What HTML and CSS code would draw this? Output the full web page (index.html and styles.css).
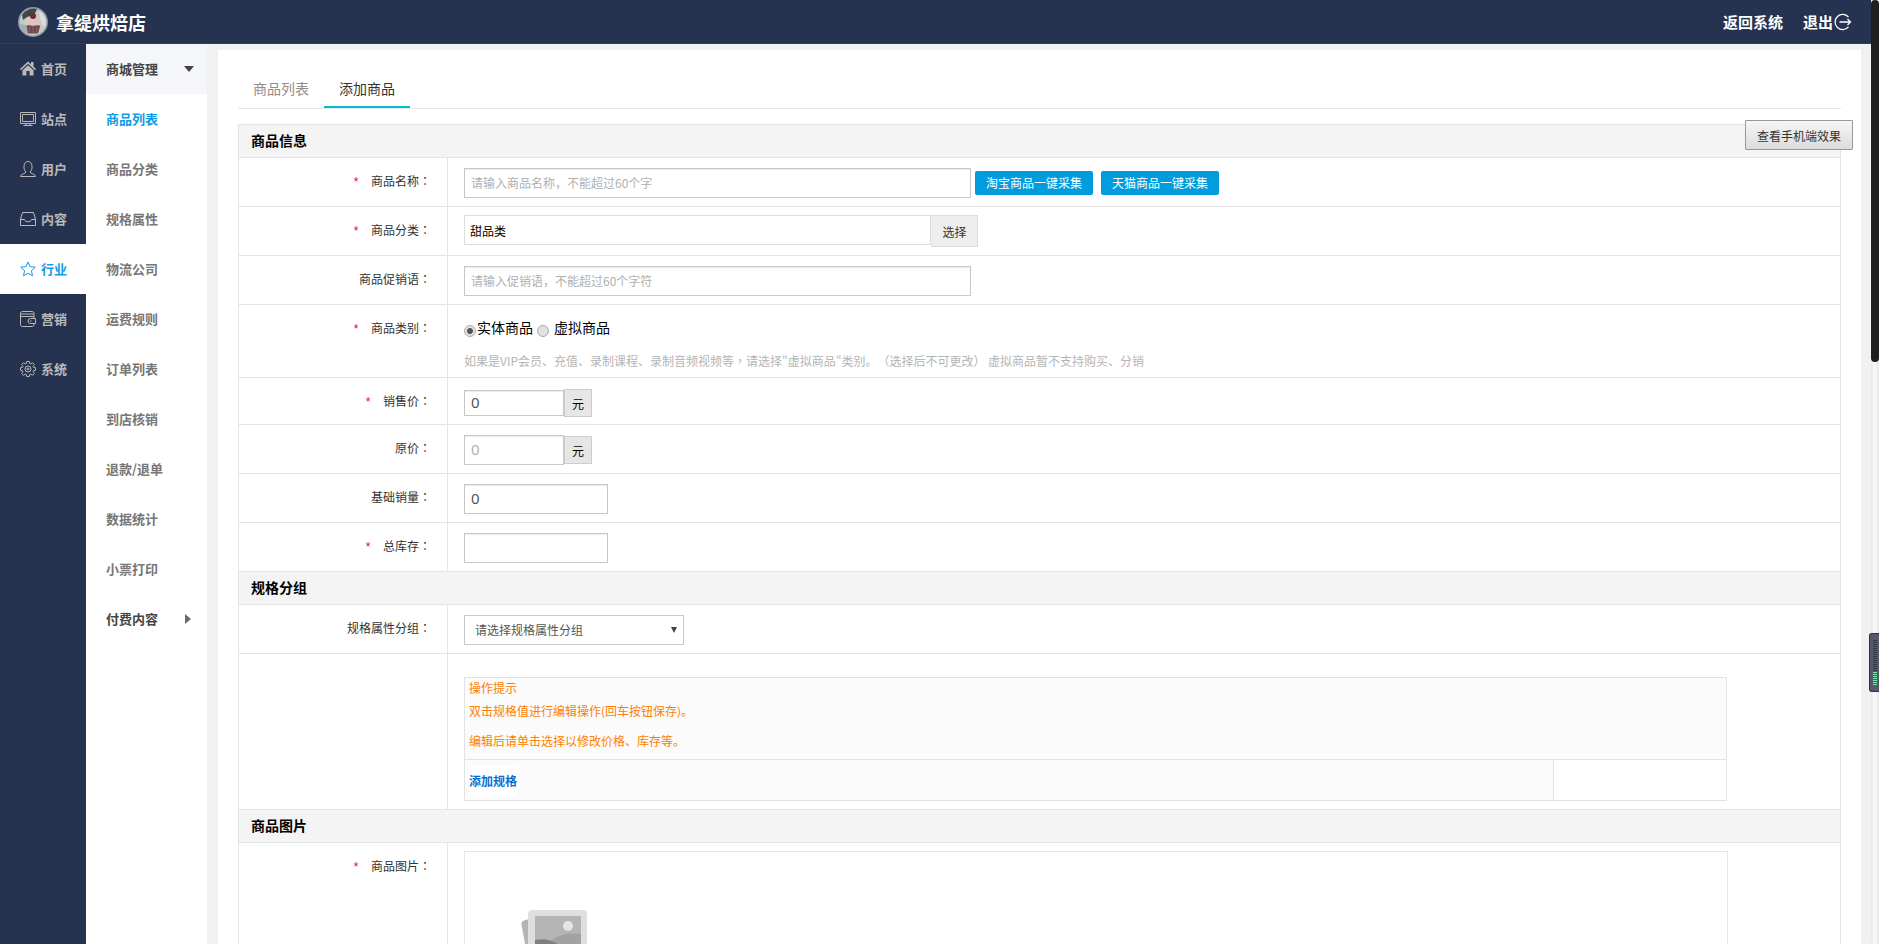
FILE: index.html
```html
<!DOCTYPE html>
<html lang="zh-CN">
  <head>
    <meta charset="UTF-8" />
    <title>添加商品 - 拿缇烘焙店</title>
    <link rel="stylesheet" href="styles.css">
  </head>
  <body>
    <header class="header">
      <svg class="avatar" viewBox="0 0 30 30">
        <circle cx="15" cy="15" r="15" fill="#8e96a8" />
        <circle cx="15" cy="15" r="13.500" fill="#c3cbc8" />
        <path d="M4 8a13.500 13.500 0 0 1 15-6l-3 6-7 2-4 3z" fill="#3d4a43" />
        <path d="M21 4a13 13 0 0 1 6 16l-4-4z" fill="#d9dfdc" />
        <path d="M2 17l6 1 2 9a13 13 0 0 1-8-10z" fill="#9cb2b0" />
        <path d="M8 16l2 10.500h10L23 16z" fill="#70464a" />
        <path d="M11 18l1 8M15 18v8M19 18l-1 8" stroke="#8d6463" fill="none" />
        <path d="M6.500 16c0-3 3-3 3.500-5 2-3 8-3 10 0 .5 2 4 2 4 5s-3 3-5 2c-2 1-6 1-8 0-3 1-4.500 0-4.500-2z" fill="#d9c6c0" />
        <circle cx="15" cy="9" r="3" fill="#7b2433" />
      </svg>
      <h1 class="shop-name">拿缇烘焙店</h1>
      <a class="header-link">返回系统</a>
      <a class="header-link logout">退出<svg class="logout-icon" viewBox="0 0 18 18">
          <path d="M14.500 4.100A7.600 7.600 0 1 0 14.500 13.900M5.500 9h11M13.500 6l3 3-3 3" />
        </svg></a>
    </header>

    <div class="wrapper">
      <nav class="sidebar">
        <a class="side-item">
          <svg viewBox="0 0 16 16"><path class="solid" d="M8 .5l3 2.800V1h2.500v4.500L16 8l-1 1.200-7-6.500-7 6.500L0 8zM8 4.200l5.500 5V14.500H9.600v-4.500H6.400v4.500H2.500V9.200z" /></svg>首页
        </a>
        <a class="side-item">
          <svg viewBox="0 0 16 16"><path d="M.5 1.500h15v11H.5zM2.500 3.500h11v7h-11zM6 12.500v2M10 12.500v2M3.500 14.500h9" /></svg>站点
        </a>
        <a class="side-item">
          <svg viewBox="0 0 16 16"><path d="M6 11C3 9 3 .5 8 .5s5 8.500 2 10.500c0 1.500 5 1.500 5.500 4.500H.5c.5-3 5.500-3 5.500-4.500z" /></svg>用户
        </a>
        <a class="side-item">
          <svg viewBox="0 0 16 16"><path d="M2.500 1.500h11l2 6.500v6.500H.5V8zM.5 8.500h4c.3 3 6.700 3 7 0h4" /></svg>内容
        </a>
        <a class="side-item active">
          <svg viewBox="0 0 16 16"><path d="M8 1l2.100 4.700 5.100.5-3.800 3.500 1.100 5.100L8 12.300l-4.500 2.500 1.100-5.100L.8 6.200l5.100-.5z" /></svg>行业
        </a>
        <a class="side-item">
          <svg viewBox="0 0 16 16"><path d="M14 7V2.500c0-1.300-.7-2-2-2H2.500c-1.300 0-2 .7-2 2v11c0 1.300.7 2 2 2H12c1.300 0 2-.7 2-2V13M.5 3h13.500M.5 5.500h13.500M15.500 7.500h-5a2.500 2.500 0 0 0 0 5h5zM10 10h1.500" /></svg>营销
        </a>
        <a class="side-item">
          <svg viewBox="0 0 16 16"><path d="M6.700.5h2.600l.4 2 1 .4 1.800-1.200 1.800 1.800-1.200 1.800.4 1 2 .4v2.600l-2 .4-.4 1 1.200 1.800-1.800 1.800-1.800-1.200-1 .4-.4 2H6.700l-.4-2-1-.4-1.800 1.200-1.800-1.800 1.200-1.800-.4-1-2-.4V6.700l2-.4.4-1-1.200-1.800 1.800-1.800 1.800 1.200 1-.4z" /><circle cx="8" cy="8" r="3" /><circle cx="8" cy="8" r="1" /></svg>系统
        </a>
      </nav>

      <nav class="submenu">
        <a class="sub-item group open">商城管理<span class="arrow-down"></span></a>
        <a class="sub-item active">商品列表</a>
        <a class="sub-item">商品分类</a>
        <a class="sub-item">规格属性</a>
        <a class="sub-item">物流公司</a>
        <a class="sub-item">运费规则</a>
        <a class="sub-item">订单列表</a>
        <a class="sub-item">到店核销</a>
        <a class="sub-item">退款/退单</a>
        <a class="sub-item">数据统计</a>
        <a class="sub-item">小票打印</a>
        <a class="sub-item group">付费内容<span class="arrow-right"></span></a>
      </nav>

      <main class="content">
        <div class="tabs">
          <a class="tab">商品列表</a>
          <a class="tab active">添加商品</a>
        </div>

        <div class="form-table">
          <div class="form-title">商品信息</div>
          <div class="form-row">
            <div class="label"><i>*</i>商品名称<span class="colon" lang="zh-TW">：</span></div>
            <div class="field">
              <input class="input wide" type="text" placeholder="请输入商品名称，不能超过60个字" />
              <button class="btn-blue">淘宝商品一键采集</button>
              <button class="btn-blue">天猫商品一键采集</button>
            </div>
          </div>
          <div class="form-row">
            <div class="label"><i>*</i>商品分类<span class="colon" lang="zh-TW">：</span></div>
            <div class="field field-category">
              <input class="input category" type="text" value="甜品类" />
              <button class="btn-choose">选择</button>
            </div>
          </div>
          <div class="form-row">
            <div class="label">商品促销语<span class="colon" lang="zh-TW">：</span></div>
            <div class="field">
              <input class="input wide" type="text" placeholder="请输入促销语，不能超过60个字符" />
            </div>
          </div>
          <div class="form-row row-type">
            <div class="label"><i>*</i>商品类别<span class="colon" lang="zh-TW">：</span></div>
            <div class="field field-type">
              <div class="radios">
                <span class="radio checked"></span><label>实体商品</label>
                <span class="radio second"></span><label>虚拟商品</label>
              </div>
              <p class="hint">如果是VIP会员、充值、录制课程、录制音频视频等<span class="colon" lang="zh-TW">，</span>请选择"虚拟商品"类别。（选择后不可更改） 虚拟商品暂不支持购买、分销</p>
            </div>
          </div>
          <div class="form-row row-price">
            <div class="label"><i>*</i>销售价<span class="colon" lang="zh-TW">：</span></div>
            <div class="field field-price">
              <input class="input number price low" type="text" value="0" />
              <span class="unit">元</span>
            </div>
          </div>
          <div class="form-row">
            <div class="label">原价<span class="colon" lang="zh-TW">：</span></div>
            <div class="field field-price">
              <input class="input number price" type="text" placeholder="0" />
              <span class="unit">元</span>
            </div>
          </div>
          <div class="form-row">
            <div class="label">基础销量<span class="colon" lang="zh-TW">：</span></div>
            <div class="field"><input class="input number" type="text" value="0" /></div>
          </div>
          <div class="form-row">
            <div class="label"><i>*</i>总库存<span class="colon" lang="zh-TW">：</span></div>
            <div class="field"><input class="input number" type="text" /></div>
          </div>

          <div class="form-title">规格分组</div>
          <div class="form-row">
            <div class="label">规格属性分组<span class="colon" lang="zh-TW">：</span></div>
            <div class="field">
              <div class="select">请选择规格属性分组<span class="select-arrow"></span></div>
            </div>
          </div>
          <div class="form-row row-spec">
            <div class="label"></div>
            <div class="field field-spec">
              <div class="spec-box">
                <div class="spec-tips">
                  <h4>操作提示</h4>
                  <p>双击规格值进行编辑操作(回车按钮保存)。</p>
                  <p>编辑后请单击选择以修改价格、库存等。</p>
                </div>
                <div class="spec-footer">
                  <div class="spec-add"><a>添加规格</a></div>
                  <div class="spec-empty"></div>
                </div>
              </div>
            </div>
          </div>

          <div class="form-title">商品图片</div>
          <div class="form-row row-image">
            <div class="label"><i>*</i>商品图片<span class="colon" lang="zh-TW">：</span></div>
            <div class="field field-image">
              <div class="image-box">
                <svg class="image-icon" viewBox="0 0 68 60">
                  <path d="M8 9l-5 1.500Q0 11.500.5 14.500L8 56z" fill="#b4b4b4" />
                  <rect x="7" y="0" width="59" height="56" rx="4" fill="#dfdfdf" />
                  <rect x="14" y="6" width="46" height="44" fill="#b5b5b5" />
                  <path d="M31 30c9-7 20-7 29-6v26H14z" fill="#a2a2a2" />
                  <path d="M14 30c9-2 17 0 24 5v15H14z" fill="#808080" />
                  <circle cx="47" cy="16" r="5" fill="#e4e4e4" />
                </svg>
              </div>
            </div>
          </div>
        </div>
      </main>
    </div>

    <button class="preview-btn">查看手机端效果</button>

    <!-- scrollbar -->
    <div class="scrollbar"><div class="scroll-thumb"></div></div>
    <div class="meter"><div class="meter-off"></div><div class="meter-on"></div></div>
  </body>
</html>
```

FILE: styles.css
```css
* {
  box-sizing: border-box;
}

body {
  margin: 0;
  height: 944px;
  overflow: hidden;
  position: relative;
  background: #f1f1f1;
  color: #333;
  font-family: "Noto Sans CJK SC", sans-serif;
  font-size: 12px;
  text-spacing-trim: space-all;
}

input,
button {
  font-family: inherit;
  margin: 0;
}

/* header */
.header {
  display: flex;
  align-items: center;
  height: 44px;
  padding: 0 19px 0 18px;
  margin-right: 8px;
  background: #263350;
  border-bottom: 1px solid #2f3c5c;
  color: #fff;
}

.avatar {
  width: 30px;
  height: 30px;
}

.shop-name {
  flex: 1;
  margin: 0 0 0 8px;
  font-size: 18px;
  line-height: 26px;
}

.header-link {
  display: flex;
  align-items: center;
  font-size: 15px;
  font-weight: bold;
}

.logout {
  margin-left: 20px;
}

.logout-icon {
  width: 18px;
  height: 18px;
  margin: 1px 0 0 1px;
  fill: none;
  stroke: #fff;
  stroke-width: 1.3;
}

/* menus */
.wrapper {
  display: flex;
  height: 900px;
  margin-right: 8px;
}

.sidebar {
  width: 86px;
  background: #263350;
}

.side-item {
  display: flex;
  align-items: center;
  height: 50px;
  padding: 0 0 1px 20px;
  color: #b9b9b9;
  font-size: 13px;
  font-weight: bold;
}

.side-item svg {
  width: 16px;
  height: 16px;
  margin: 1px 5px 0 0;
  fill: none;
  stroke: currentColor;
  stroke-width: 1;
}

.side-item .solid {
  fill: currentColor;
  stroke: none;
}

.side-item.active {
  background: #fff;
  color: #0e9ce6;
}

.submenu {
  width: 121px;
  background: #fff;
}

.sub-item {
  display: flex;
  align-items: center;
  justify-content: space-between;
  height: 50px;
  padding: 0 13px 1px 20px;
  color: #777;
  font-size: 13px;
  font-weight: bold;
}

.sub-item.group {
  color: #444;
}

.sub-item.open {
  background: #f4f6f9;
}

.sub-item.active {
  color: #0e9ce6;
}

.arrow-down {
  border: 5px solid transparent;
  border-top: 6px solid #444;
  border-bottom: 0;
}

.arrow-right {
  margin-right: 3px;
  border: 5px solid transparent;
  border-left: 6px solid #666c75;
  border-right: 0;
}

/* content */
.content {
  flex: 1;
  margin: 6px 10px 0 11px;
  padding: 22px 20px 0;
  background: #fff;
  overflow: hidden;
}

.tabs {
  display: flex;
  height: 37px;
  border-bottom: 1px solid #e6e6e6;
}

.tab {
  width: 86px;
  height: 36px;
  line-height: 32px;
  text-align: center;
  font-size: 14px;
  color: #968b8b;
}

.tab.active {
  border-bottom: 2px solid #00bcd4;
  color: #333;
}

.form-table {
  margin-top: 15px;
  border: 1px solid #e4e4e4;
}

.form-title {
  height: 33px;
  padding-left: 12px;
  border-bottom: 1px solid #e4e4e4;
  background: #f4f4f4;
  color: #000;
  font-size: 14px;
  font-weight: bold;
  line-height: 30px;
}

.form-row {
  display: flex;
  height: 49px;
  border-bottom: 1px solid #e4e4e4;
}

.label {
  width: 209px;
  padding: 14px 16px 0 0;
  border-right: 1px solid #e4e4e4;
  line-height: 18px;
  text-align: right;
}

.label i {
  margin-right: 13px;
  color: #f00028;
  font-family: "Liberation Sans", sans-serif;
}

/* centered punctuation */
.colon {
  font-family: "Noto Sans CJK TC", sans-serif;
}

.field {
  display: flex;
  align-items: flex-start;
  flex: 1;
  padding: 10px 0 0 16px;
}

.input {
  height: 30px;
  padding: 0 6px 1px;
  border: 1px solid #c8c8c8;
  border-radius: 0;
  outline: none;
  background: #fff;
  box-shadow: inset 0 1px 1px rgba(0, 0, 0, 0.08);
  font-size: 12px;
}

.input::placeholder {
  color: #b0b0b0;
}

.input.wide {
  width: 507px;
}

.input.number {
  width: 144px;
  padding-bottom: 2px;
  font-family: "Noto Sans", sans-serif;
  font-size: 15px;
  color: #555;
}

.btn-blue {
  width: 118px;
  height: 24px;
  margin: 3px 4px 0;
  padding: 0;
  border: 0;
  border-radius: 2px;
  background: #009cdd;
  color: #fff;
  font-size: 12px;
  line-height: 24px;
}

.field-category {
  padding-top: 8px;
}

.input.category {
  width: 467px;
  padding: 2px 6px 1px 5px;
  border-color: #dcdcdc;
  box-shadow: none;
  color: #000;
}

.btn-choose {
  width: 47px;
  height: 32px;
  padding: 0;
  border: 1px solid #dcdcdc;
  border-left-color: #eee;
  background: #eee;
  color: #333;
  font-size: 12px;
}

.row-type {
  height: 73px;
}

.field-type {
  display: block;
}

.radios {
  display: flex;
  height: 28px;
  line-height: 24px;
  color: #000;
  font-size: 14px;
}

.radio {
  width: 12px;
  height: 12px;
  margin: 10px 1px 0 0;
  border: 1px solid #aaa;
  border-radius: 50%;
  background: #e2e2e2;
}

.radio.second {
  margin: 10px 5px 0 4px;
}

.radio.checked {
  background: radial-gradient(circle, #555 0 2.5px, #e2e2e2 3.5px);
}

.hint {
  margin: 9px 0 0;
  color: #b5b5b5;
  line-height: 18px;
}

.row-price {
  height: 47px;
}

.row-price .field {
  padding-top: 11px;
}

.input.price {
  width: 100px;
}

.input.low {
  height: 26px;
  margin-top: 1px;
}

.unit {
  width: 28px;
  height: 28px;
  border: 1px solid #ccc;
  background: #e6e6e6;
  color: #000;
  font-size: 12px;
  line-height: 28px;
  text-align: center;
}

.input.price:not(.low) + .unit {
  margin-top: 1px;
}

.select {
  display: flex;
  align-items: center;
  justify-content: space-between;
  width: 220px;
  height: 30px;
  padding: 0 6px 1px 10px;
  border: 1px solid #c8c8c8;
  color: #555;
}

.select-arrow {
  border: 3px solid transparent;
  border-top: 6px solid #444;
  border-bottom: 0;
}

.row-spec {
  height: 156px;
}

.field-spec {
  padding-top: 23px;
}

.spec-box {
  width: 1263px;
  height: 124px;
  border: 1px solid #e2e2e2;
  background: #fbfbfb;
}

.spec-tips {
  height: 82px;
  padding-left: 4px;
  border-bottom: 1px solid #e2e2e2;
  color: #ff8000;
}

.spec-tips h4,
.spec-tips p {
  margin: 0;
  font-size: 12px;
  font-weight: normal;
  line-height: 22px;
}

.spec-tips h4 {
  height: 22px;
  line-height: 20px;
}

.spec-tips p + p {
  margin-top: 8px;
}

.spec-footer {
  display: flex;
  height: 40px;
}

.spec-add {
  flex: 1;
  padding: 6px 0 0 4px;
}

.spec-add a {
  display: inline-block;
  height: 30px;
  border-radius: 3px;
  background: #fff;
  color: #0a6fd0;
  font-weight: bold;
  line-height: 29px;
}

.spec-empty {
  width: 173px;
  border-left: 1px solid #e2e2e2;
  background: #fff;
}

.row-image {
  height: 300px;
}

.field-image {
  padding-top: 8px;
}

.image-box {
  width: 1264px;
  height: 280px;
  padding: 58px 0 0 56px;
  border: 1px solid #e6e6e6;
}

.image-icon {
  width: 68px;
  height: 60px;
}

/* floating elements */
.preview-btn {
  position: absolute;
  top: 120px;
  right: 26px;
  width: 108px;
  height: 30px;
  padding: 0;
  border: 1px solid #979797;
  border-radius: 1px;
  background: linear-gradient(#f6f6f6, #dcdcdc);
  color: #333;
  font-size: 12px;
}

.scrollbar {
  position: absolute;
  top: 0;
  right: 0;
  width: 8px;
  height: 944px;
  border-radius: 4px;
  background: linear-gradient(90deg, #e6e6e6, #fafafa 40%, #f6f6f6 60%, #e6e6e6);
}

.scroll-thumb {
  height: 362px;
  border-radius: 4px;
  background: #201f1e;
}

.meter {
  position: absolute;
  top: 633px;
  right: 0;
  width: 10px;
  height: 59px;
  padding: 6px 0 0 3px;
  border: 1px solid #2f313f;
  border-right: 0;
  border-radius: 3px 0 0 3px;
  background: #555a6b;
}

.meter-off,
.meter-on {
  width: 4px;
  height: 32px;
  background: repeating-linear-gradient(#33353f 0 1px, transparent 1px 2px);
}

.meter-on {
  height: 14px;
  background: repeating-linear-gradient(#7fe8a8 0 1px, transparent 1px 2px);
}
```
